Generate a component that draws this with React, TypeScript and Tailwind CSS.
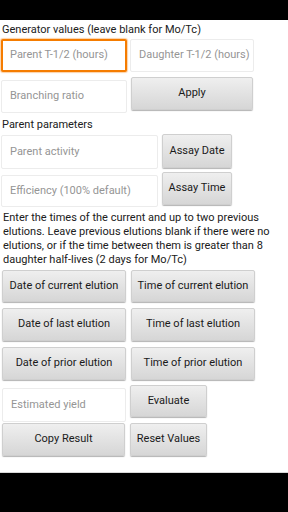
import React from "react";

const font = { fontFamily: "Roboto, 'Liberation Sans', sans-serif" };

function Field({ ph, className = "", focused = false }: { ph: string; className?: string; focused?: boolean }) {
  return (
    <div
      className={
        "flex items-center bg-white pl-2 text-[11px] text-[#959595] rounded-[2px] " +
        (focused
          ? "border-2 border-[#f57c00] shadow-[0_0_1px_1px_rgba(245,124,0,0.35)] pl-[7px]"
          : "border border-[#ececec]") +
        " " +
        className
      }
    >
      {ph}
    </div>
  );
}

function Btn({ label, className = "" }: { label: string; className?: string }) {
  return (
    <div
      className={
        "flex items-center justify-center rounded-[2px] bg-gradient-to-b from-[#efefef] to-[#d6d6d6] border border-[#cfcfcf] shadow-[0_1px_1px_rgba(0,0,0,0.3)] text-[11px] text-[#1a1a1a] " +
        className
      }
    >
      {label}
    </div>
  );
}

export default function App() {
  return (
    <div className="w-[288px] h-[512px] flex flex-col bg-black" style={font}>
      <div className="h-[20px] bg-black shrink-0" />
      <div className="flex-1 bg-white flex flex-col border-b border-[#d8d8d8]">
        <div className="text-[11px] text-[#202020] pl-[2px] pt-[2px] h-[17px] leading-[15px]">
          Generator values (leave blank for Mo/Tc)
        </div>
        <div className="flex mt-[2px] pl-[1px] gap-[3px]">
          <Field ph="Parent T-1/2 (hours)" focused className="w-[126px] h-[33px]" />
          <Field ph="Daughter T-1/2 (hours)" className="w-[124px] h-[33px]" />
        </div>
        <div className="flex pl-[1px] mt-[5px] items-start">
          <Field ph="Branching ratio" className="w-[126px] h-[33px] mt-[3px]" />
          <Btn label="Apply" className="w-[122px] h-[33px] ml-[4px]" />
        </div>
        <div className="text-[11px] text-[#202020] pl-[2px] mt-[4px] h-[15px] leading-[15px]">
          Parent parameters
        </div>
        <div className="flex pl-[1px] mt-[2px] items-start">
          <Field ph="Parent activity" className="w-[157px] h-[34px] mt-[1px]" />
          <Btn label="Assay Date" className="w-[70px] h-[34px] ml-[4px]" />
        </div>
        <div className="flex pl-[1px] mt-[3px] items-start">
          <Field ph="Efficiency (100% default)" className="w-[157px] h-[32px] mt-[3px]" />
          <Btn label="Assay Time" className="w-[70px] h-[33px] ml-[4px]" />
        </div>
        <div className="text-[11px] text-[#202020] pl-[3px] pr-[4px] mt-[4px] leading-[14px]">
          Enter the times of the current and up to two previous elutions. Leave previous elutions blank if there were no elutions, or if the time between them is greater than 8 daughter half-lives (2 days for Mo/Tc)
        </div>
        <div className="flex flex-col pl-[2px] mt-[3px] gap-[6px]">
          <div className="flex gap-[5px]">
            <Btn label="Date of current elution" className="w-[124px] h-[32px]" />
            <Btn label="Time of current elution" className="w-[124px] h-[32px]" />
          </div>
          <div className="flex gap-[5px]">
            <Btn label="Date of last elution" className="w-[124px] h-[33px]" />
            <Btn label="Time of last elution" className="w-[124px] h-[33px]" />
          </div>
          <div className="flex gap-[5px]">
            <Btn label="Date of prior elution" className="w-[124px] h-[33px]" />
            <Btn label="Time of prior elution" className="w-[124px] h-[33px]" />
          </div>
        </div>
        <div className="flex pl-[2px] mt-[5px] items-start">
          <Field ph="Estimated yield" className="w-[124px] h-[34px] mt-[3px]" />
          <Btn label="Evaluate" className="w-[77px] h-[32px] ml-[4px]" />
        </div>
        <div className="flex pl-[2px] mt-[1px]">
          <Btn label="Copy Result" className="w-[123px] h-[33px]" />
          <Btn label="Reset Values" className="w-[77px] h-[33px] ml-[5px]" />
        </div>
      </div>
      <div className="h-[39px] bg-black shrink-0" />
    </div>
  );
}
